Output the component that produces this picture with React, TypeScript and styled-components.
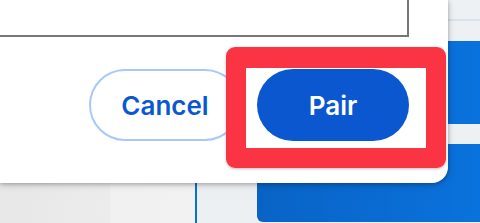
import React from "react";
import styled, { createGlobalStyle } from "styled-components";

const Global = createGlobalStyle`
  html, body { margin: 0; padding: 0; }
  body { width: 480px; height: 223px; overflow: hidden; font-family: Inter, Roboto, "Liberation Sans", sans-serif; }
`;

const Stage = styled.div`
  position: relative;
  width: 480px;
  height: 223px;
  overflow: hidden;
`;

const Backdrop = styled.div`
  display: flex;
  width: 100%;
  height: 100%;
`;

const LeftPane = styled.div`
  width: 195px;
  background: linear-gradient(90deg, #e7e7e7 0%, #ececec 56%, #f1f1f1 57%, #f2f2f2 100%);
`;

const Divider = styled.div`
  width: 2px;
  background: #0b6fd6;
`;

const MidPane = styled.div`
  width: 60px;
  background: linear-gradient(180deg, #e6eaee 0%, #edf0f3 100%);
`;

const RightPane = styled.div`
  flex: 1;
  display: flex;
  flex-direction: column;
  background: #eef1f4;
`;

const TopStrip = styled.div`
  height: 19px;
  border-bottom: 2px solid #d7e2ec;
`;

const TopGap = styled.div`
  height: 20px;
`;

const BluePanel = styled.div`
  flex: 1;
  margin-bottom: 1px;
  display: flex;
  flex-direction: column;
  border-bottom-left-radius: 6px;
  overflow: hidden;
  background: linear-gradient(90deg, #0963c6 0%, #0a72dc 100%);
`;

const BlueBlock = styled.div<{ $h: number }>`
  height: ${(p) => p.$h}px;
  flex: ${(p) => (p.$h ? "none" : "1")};
`;

const Band = styled.div`
  height: 20px;
  background: #eef1f4;
`;

const Dialog = styled.div`
  position: absolute;
  left: 0;
  top: 0;
  width: 448px;
  height: 183px;
  box-sizing: border-box;
  background: #ffffff;
  border-bottom-right-radius: 16px;
  box-shadow: 0 1px 4px rgba(0, 0, 0, 0.28), 0 2px 8px rgba(0, 0, 0, 0.12);
  padding-right: 39px;
  display: flex;
  flex-direction: column;
`;

const Field = styled.div`
  height: 39px;
  margin-top: -2px;
  margin-left: -2px;
  box-sizing: border-box;
  border: 2px solid #777777;
`;

const Footer = styled.div`
  display: flex;
  justify-content: flex-end;
  gap: 16px;
  margin-top: 32px;
`;

const Button = styled.button<{ $primary?: boolean }>`
  width: 152px;
  height: 72px;
  border-radius: 36px;
  box-sizing: border-box;
  font-family: Inter, Roboto, "Liberation Sans", sans-serif;
  font-weight: 600;
  font-size: 26px;
  padding: 0;
  cursor: pointer;
  border: ${(p) => (p.$primary ? "none" : "2px solid #a8c7fa")};
  background: ${(p) => (p.$primary ? "#0b57d0" : "#ffffff")};
  color: ${(p) => (p.$primary ? "#ffffff" : "#0b57d0")};
`;

const Highlight = styled.div`
  position: absolute;
  left: 226px;
  top: 47px;
  width: 220px;
  height: 121px;
  box-sizing: border-box;
  border: 20px solid #fa3443;
  border-top-width: 21px;
  border-radius: 9px;
  box-shadow: 0 1px 3px rgba(0, 0, 0, 0.25);
  pointer-events: none;
`;

export default function App() {
  return (
    <Stage>
      <Global />
      <Backdrop>
        <LeftPane />
        <Divider />
        <MidPane />
        <RightPane>
          <TopStrip />
          <TopGap />
          <BluePanel>
            <BlueBlock $h={83} />
            <Band />
            <BlueBlock $h={0} />
          </BluePanel>
        </RightPane>
      </Backdrop>
      <Dialog>
        <Field />
        <Footer>
          <Button>Cancel</Button>
          <Button $primary>Pair</Button>
        </Footer>
      </Dialog>
      <Highlight />
    </Stage>
  );
}
